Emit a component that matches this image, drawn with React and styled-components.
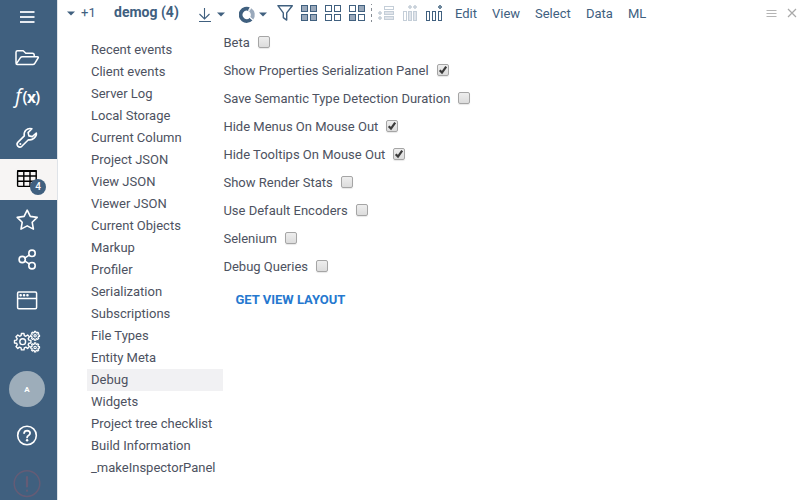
import React from 'react';
import styled, { createGlobalStyle } from 'styled-components';

const NAVY = '#40607f';
const MIST = '#9aa9bb';

const GlobalStyle = createGlobalStyle`
  * { box-sizing: border-box; }
  body {
    margin: 0;
    background: #fff;
    color: #4d5261;
    font: 13px/22px Roboto, sans-serif;
    overflow: hidden;
  }
  svg { display: block; flex: none; }
`;

const Shell = styled.div`
  display: flex;
  height: 500px;
  width: 800px;
  overflow: hidden;
`;

const Sidebar = styled.nav`
  width: 58px;
  flex: none;
  display: flex;
  flex-direction: column;
  background: ${NAVY};
  border-right: 1px solid #dfe3e8;
`;

const SideItem = styled.div`
  height: ${(p) => p.$h}px;
  flex: none;
  position: relative;
  background: ${(p) => (p.$active ? '#f7f5f4' : 'transparent')};
`;

const Badge = styled.span`
  position: absolute;
  left: 30px;
  top: 20px;
  width: 16px;
  height: 16px;
  border-radius: 50%;
  background: ${NAVY};
  color: #fff;
  font: 500 10px/16px Roboto, sans-serif;
  text-align: center;
`;

const Avatar = styled.div`
  width: 36px;
  height: 36px;
  flex: none;
  margin: 9px 0 0 9px;
  border-radius: 50%;
  background: #9dadba;
  color: #fff;
  font: 700 8px/37px Roboto, sans-serif;
  text-align: center;
`;

const Main = styled.main`
  flex: 1;
  display: flex;
  flex-direction: column;
`;

const Toolbar = styled.header`
  height: 28px;
  flex: none;
  display: flex;
  align-items: center;
  color: ${NAVY};
`;

const ToolText = styled.span`
  width: ${(p) => p.$w}px;
  flex: none;
  white-space: nowrap;
  line-height: 27px;
  height: 28px;
`;

const CountText = styled(ToolText)`
  line-height: 25px;
`;

const Title = styled(ToolText)`
  font-size: 14px;
  font-weight: 700;
  line-height: 24px;
`;

const WindowButtons = styled.div`
  margin-left: auto;
`;

const Body = styled.div`
  display: flex;
  flex: 1;
`;

const List = styled.ul`
  list-style: none;
  width: 136px;
  margin: 11px 0 0 29px;
  padding: 0;
`;

const ListItem = styled.li`
  height: 22px;
  padding-left: 4px;
  white-space: nowrap;
  background: ${(p) => (p.$selected ? '#f1f1f3' : 'transparent')};
`;

const Settings = styled.section`
  padding: 1px 0 0 0.45px;
`;

const Field = styled.label`
  display: flex;
  align-items: center;
  height: 28px;
  gap: 8px;
  white-space: nowrap;
`;

const Check = styled.input`
  appearance: none;
  width: 12px;
  height: 12px;
  margin: 0;
  border: 1px solid #a5a5a5;
  border-radius: 2px;
  background: linear-gradient(#eeeeee, #dcdcdc);
  box-shadow: 0 1px 1px #00000018;
`;

const CheckWrap = styled.span`
  display: grid;
  margin-bottom: 2px;
  & > * { grid-area: 1 / 1; }
  svg { z-index: 1; pointer-events: none; }
`;

const LayoutButton = styled.button`
  display: block;
  margin: 8px 0 0 12px;
  padding: 0;
  border: 0;
  background: none;
  color: #2578cf;
  font: 700 13px/22px Roboto, sans-serif;
`;

const SideSvg = ({ h, children }) => (
  <svg width="57" height={h} viewBox={`0 0 57 ${h}`} fill="none" stroke="#fff" strokeWidth="1.5" strokeLinejoin="round" strokeLinecap="round">
    {children}
  </svg>
);

function gearPath(cx, cy, outer, inner, teeth) {
  const pts = [];
  const step = (Math.PI * 2) / teeth;
  for (let i = 0; i < teeth; i += 1) {
    [[-0.33, inner], [-0.2, outer], [0.2, outer], [0.33, inner]].forEach(([o, r]) => {
      const a = (i + o) * step - Math.PI / 2;
      pts.push(`${(cx + r * Math.cos(a)).toFixed(2)},${(cy + r * Math.sin(a)).toFixed(2)}`);
    });
  }
  return `M${pts.join('L')}Z`;
}

const sideItems = [
  { id: 'menu', h: 37, icon: <path d="M20 12h14.5M20 17h14.5M20 22h14.5" stroke="#e6eaf0" strokeWidth="2" strokeLinecap="butt" /> },
  { id: 'open', h: 41, icon: <path d="M16 25.5V15.3q0-1.6 1.6-1.6h5.6l2.6 2.6h6.6q1.8 0 1.8 1.8v1.6M16.3 26.8l4-6q.7-1.1 2-1.1h15q1.6 0 .8 1.3l-3.3 5.3q-.7 1.2-2 1.2H17.2q-1.2 0-1.2-1.5" /> },
  {
    id: 'functions', h: 40, icon: (
      <g fill="#fff" stroke="none">
        <text x="15.2" y="25" fontFamily="Noto Sans, sans-serif" fontStyle="italic" fontSize="19">f</text>
        <text x="22.4" y="24.8" fontFamily="Noto Sans, sans-serif" fontSize="16.5" fontWeight="500">(</text>
        <text x="26.9" y="24.6" fontFamily="Noto Sans, sans-serif" fontSize="15.5" fontWeight="700">x</text>
        <text x="35" y="24.8" fontFamily="Noto Sans, sans-serif" fontSize="16.5" fontWeight="500">)</text>
      </g>
    ),
  },
  {
    id: 'tools', h: 41, icon: (
      <g transform="translate(0 .8)">
        <path d="M36.3 14.2l-4 3.6-3.4-.7-.8-3.3 3.8-3.8q-3.6-1-6.1 1.5-2.2 2.3-1.5 5.6l-6.5 6.5q-1.6 1.8 0 3.8 2 1.9 4 .1l6.6-6.6q3.3.7 5.7-1.5 2.9-2.5 2.2-5.2z" strokeWidth="1.6" />
        <circle cx="20.4" cy="25.3" r="1" fill="#fff" stroke="none" />
      </g>
    ),
  },
  {
    id: 'tables', h: 41, active: true, badge: '4', icon: (
      <g stroke="#000" strokeWidth="1.4">
        <rect x="17.6" y="11.8" width="18.6" height="15.6" rx="1" />
        <path d="M18 12h18" strokeWidth="2" />
        <path d="M18 17h18M18 22.2h18M23.8 12v15M30 12v15" />
      </g>
    ),
  },
  { id: 'favorites', h: 40, icon: <path d="M27.2 10.1l3.1 6.3 6.9 1-5 4.9 1.2 6.8-6.2-3.2-6.2 3.2 1.2-6.8-5-4.9 6.9-1z" strokeWidth="1.6" /> },
  {
    id: 'share', h: 40, icon: (
      <g strokeWidth="1.6">
        <circle cx="22.2" cy="19.5" r="3.1" />
        <circle cx="32" cy="13.3" r="3.2" />
        <circle cx="32" cy="25.7" r="3.2" />
        <path d="M25 17.8l4.2-2.7M25 21.2l4.2 2.7" />
      </g>
    ),
  },
  {
    id: 'window', h: 41, icon: (
      <g>
        <rect x="17.6" y="12" width="19" height="16.7" rx="1.2" />
        <path d="M18 18.4h18.4" />
        <path d="M20.6 15.3h.1M24 15.3h.1M27.4 15.3h.1" strokeWidth="2.5" />
      </g>
    ),
  },
  {
    id: 'settings', h: 41, icon: (
      <g>
        <path d={gearPath(22.7, 20.7, 8.3, 6.3, 8)} strokeWidth="1.4" />
        <circle cx="22.7" cy="20.7" r="2.9" strokeWidth="1.4" />
        <path d={gearPath(35.1, 14.8, 4.5, 3.3, 8)} strokeWidth="1.2" />
        <circle cx="35.1" cy="14.8" r="1.2" strokeWidth="1.1" />
        <path d={gearPath(35.1, 26.4, 4.5, 3.3, 8)} strokeWidth="1.2" />
        <circle cx="35.1" cy="26.4" r="1.2" strokeWidth="1.1" />
      </g>
    ),
  },
];

const ToolSvg = ({ w, children }) => (
  <svg width={w} height="28" viewBox={`0 0 ${w} 28`} fill="none" stroke={NAVY}>
    {children}
  </svg>
);

const Caret = ({ w }) => (
  <ToolSvg w={w}>
    <path d="M0 11.5h8l-4 4z" fill={NAVY} stroke="none" />
  </ToolSvg>
);

const GridIcon = ({ filled }) => (
  <ToolSvg w={24}>
    {[[0.5, 5.5], [9.5, 5.5], [0.5, 14.5], [9.5, 14.5]].map(([x, y], i) => (
      <rect key={i} x={x} y={y} width="6" height="6" fill={filled[i] ? MIST : '#fff'} />
    ))}
  </ToolSvg>
);

const names = [
  'Recent events', 'Client events', 'Server Log', 'Local Storage', 'Current Column',
  'Project JSON', 'View JSON', 'Viewer JSON', 'Current Objects', 'Markup', 'Profiler',
  'Serialization', 'Subscriptions', 'File Types', 'Entity Meta', 'Debug', 'Widgets',
  'Project tree checklist', 'Build Information', '_makeInspectorPanel',
];

const options = [
  ['Beta', false],
  ['Show Properties Serialization Panel', true],
  ['Save Semantic Type Detection Duration', false],
  ['Hide Menus On Mouse Out', true],
  ['Hide Tooltips On Mouse Out', true],
  ['Show Render Stats', false],
  ['Use Default Encoders', false],
  ['Selenium', false],
  ['Debug Queries', false],
];

export default function App() {
  return (
    <Shell>
      <GlobalStyle />
      <Sidebar>
        {sideItems.map((s) => (
          <SideItem key={s.id} $h={s.h} $active={s.active}>
            <SideSvg h={s.h}>{s.icon}</SideSvg>
            {s.badge && <Badge>{s.badge}</Badge>}
          </SideItem>
        ))}
        <Avatar>A</Avatar>
        <SideSvg h={54}>
          <circle cx="27" cy="28.5" r="9.3" strokeWidth="1.6" />
          <path d="M24.1 26.2q.3-2.6 3-2.6 2.9.1 3 2.5 0 1.5-1.6 2.4-1.4.8-1.4 1.9" strokeWidth="1.8" />
          <circle cx="27.1" cy="33.2" r="1.2" fill="#fff" stroke="none" />
        </SideSvg>
        <SideSvg h={39}>
          <circle cx="27" cy="22.6" r="12.8" stroke="#645c76" />
          <path d="M27 16v9.5M27 29.5v.3" stroke="#645c76" strokeWidth="2.2" />
        </SideSvg>
      </Sidebar>
      <Main>
        <Toolbar>
          <ToolSvg w={9} />
          <Caret w={14} />
          <CountText $w={33}>+1</CountText>
          <Title $w={84}>demog (4)</Title>
          <ToolSvg w={19}>
            <path d="M6.5 8v11M1.5 14l5 5 5-5M1 21.5h12" strokeWidth="1.1" />
          </ToolSvg>
          <ToolSvg w={22}>
            <path d="M0 12.5h8l-4 4z" fill={NAVY} stroke="none" />
          </ToolSvg>
          <ToolSvg w={20}>
            <path d="M12.2 19A6.1 6.1 0 1 1 10.5 9.4" strokeWidth="3.9" />
            <path d="M11.2 9.8a6.1 6.1 0 0 1 1.4 8.7" stroke={MIST} strokeWidth="3.9" />
            <path d="M9.4 10.8l2.5-4.4M10.5 17l4 3.6" stroke="#fff" strokeWidth="1.1" />
          </ToolSvg>
          <ToolSvg w={18}>
            <path d="M0 12.5h8l-4 4z" fill={NAVY} stroke="none" />
          </ToolSvg>
          <ToolSvg w={24}>
            <path d="M.9 5.7h14.4l-5.6 7.2v7.2l-3.4-2.5v-4.7z" strokeWidth="1.4" strokeLinejoin="round" />
          </ToolSvg>
          <GridIcon filled={[1, 1, 1, 1]} />
          <GridIcon filled={[0, 0, 0, 0]} />
          <ToolSvg w={29}>
            <rect x=".5" y="5.5" width="6" height="6" />
            <rect x="9.5" y="5.5" width="6" height="6" fill={MIST} />
            <rect x=".5" y="14.5" width="6" height="6" fill={MIST} />
            <rect x="9.5" y="14.5" width="6" height="6" />
            <path d="M22.5 4v18" stroke="#868c94" strokeDasharray="3 3" strokeDashoffset="2" />
          </ToolSvg>
          <ToolSvg w={24}>
            <g opacity=".3">
              <rect x="6.5" y="6.5" width="9" height="3" />
              <rect x="6.5" y="11.5" width="9" height="3" fill={MIST} />
              <rect x="6.5" y="16.5" width="9" height="3" fill={MIST} />
              <path d="M0 13h4M2 11v4M0 18h4M2 16v4" strokeWidth="1.5" />
            </g>
          </ToolSvg>
          <ToolSvg w={23}>
            <g opacity=".3">
              <rect x="1.5" y="11.5" width="3" height="9" />
              <rect x="6.5" y="11.5" width="3" height="9" fill={MIST} />
              <rect x="11.5" y="11.5" width="3" height="9" fill={MIST} />
              <path d="M6 7h4M8 5v4M11 7h4M13 5v4" strokeWidth="1.5" />
            </g>
          </ToolSvg>
          <ToolSvg w={30}>
            <rect x="1.5" y="11.5" width="3" height="9" />
            <rect x="7.5" y="11.5" width="3" height="9" />
            <rect x="13.5" y="11.5" width="3" height="9" />
            <path d="M13 7h4M15 5v4" strokeWidth="2" stroke="#6d879c" />
          </ToolSvg>
          <ToolText $w={37}>Edit</ToolText>
          <ToolText $w={43}>View</ToolText>
          <ToolText $w={51}>Select</ToolText>
          <ToolText $w={42}>Data</ToolText>
          <ToolText $w={30}>ML</ToolText>
          <WindowButtons>
            <ToolSvg w={34}>
              <path d="M.5 10.5h10M.5 13.5h10M.5 16.5h10" stroke="#b4b4b4" />
              <path d="M22 9l8 8M30 9l-8 8" stroke="#a9a9a9" strokeWidth="1.2" />
            </ToolSvg>
          </WindowButtons>
        </Toolbar>
        <Body>
          <List>
            {names.map((n) => <ListItem key={n} $selected={n === 'Debug'}>{n}</ListItem>)}
          </List>
          <Settings>
            {options.map(([label, on]) => (
              <Field key={label}>
                {label}
                <CheckWrap>
                  <Check type="checkbox" defaultChecked={on} />
                  {on && (
                    <svg width="12" height="12" viewBox="0 0 12 12" fill="none" stroke="#3b3b3b" strokeWidth="2.2">
                      <path d="M2.7 6.2l2.3 2.4 4.2-6" />
                    </svg>
                  )}
                </CheckWrap>
              </Field>
            ))}
            <LayoutButton>GET VIEW LAYOUT</LayoutButton>
          </Settings>
        </Body>
      </Main>
    </Shell>
  );
}
